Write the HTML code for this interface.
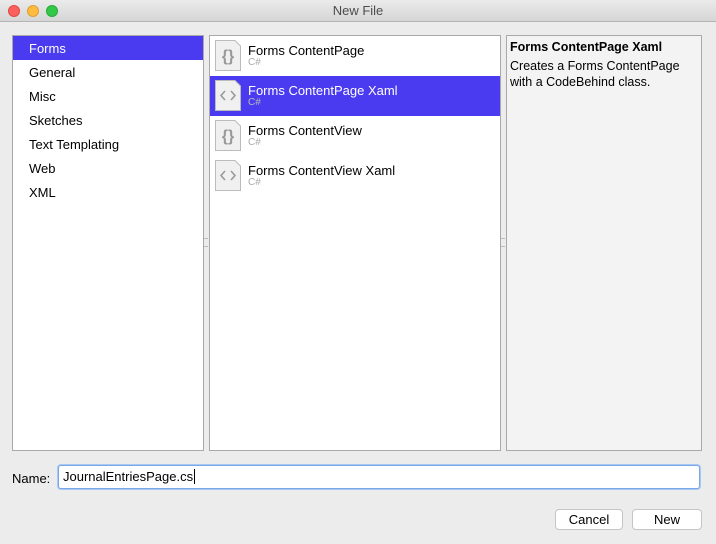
<!DOCTYPE html>
<html><head><style>
*{box-sizing:border-box;margin:0;padding:0}
body{width:716px;height:544px;background:#ececec;font-family:"Liberation Sans",sans-serif;font-size:13px;position:relative;overflow:hidden;color:#000}
.title{position:absolute;left:0;top:0;width:716px;height:22px;background:linear-gradient(#ebebeb,#d6d6d6);border-bottom:1px solid #b5b5b5;text-align:center;line-height:22px;color:#4d4d4d;font-size:13px}
.dot{position:absolute;top:5px;width:12px;height:12px;border-radius:50%}
.panel{position:absolute;top:35px;height:416px;border:1px solid #a9a9a9;background:#fff}
.lrow{height:24px;line-height:25px;padding-left:16px}
.sel{background:#4a3af0;color:#fff}
.mrow{height:40px;position:relative}
.mrow .t{position:absolute;left:38px;top:7px}
.mrow .s{position:absolute;left:38px;top:21px;font-size:10px;color:#aaa}
.mrow.sel .s{color:#bbb}
.ic{position:absolute;left:5px;top:4px;width:26px;height:31px}
.btn{position:absolute;top:509px;height:21px;background:#fff;border:1px solid #c5c5c5;border-radius:4px;text-align:center;line-height:19px;font-size:13px}
.grip{position:absolute;top:238px;width:4px;height:9px;border-top:1px solid #bbb;border-bottom:1px solid #bbb}
</style></head><body>
<div class="title">New File</div>
<div class="dot" style="left:8px;background:#fc605c;border:1px solid #de4a46"></div>
<div class="dot" style="left:27px;background:#fdbc40;border:1px solid #dea032"></div>
<div class="dot" style="left:46px;background:#34c84a;border:1px solid #27aa36"></div>

<div class="panel" style="left:12px;width:192px">
<div class="lrow sel">Forms</div>
<div class="lrow">General</div>
<div class="lrow">Misc</div>
<div class="lrow">Sketches</div>
<div class="lrow">Text Templating</div>
<div class="lrow">Web</div>
<div class="lrow">XML</div>
</div>

<div class="panel" style="left:209px;width:292px">
<div class="mrow"><svg class="ic" viewBox="0 0 26 31"><path d="M0.5 0.5H20L25.5 6V30.5H0.5Z" fill="#f0f0f0" stroke="#bbb"/><text x="13" y="21" font-size="16" font-weight="bold" fill="#999" text-anchor="middle" font-family="Liberation Sans">{}</text></svg><div class="t">Forms ContentPage</div><div class="s">C#</div></div>
<div class="mrow sel"><svg class="ic" viewBox="0 0 26 31"><path d="M0.5 0.5H20L25.5 6V30.5H0.5Z" fill="#f0f0f0" stroke="#bbb"/><path d="M10 11L6 15.5L10 20M16 11L20 15.5L16 20" fill="none" stroke="#999" stroke-width="1.6"/></svg><div class="t">Forms ContentPage Xaml</div><div class="s">C#</div></div>
<div class="mrow"><svg class="ic" viewBox="0 0 26 31"><path d="M0.5 0.5H20L25.5 6V30.5H0.5Z" fill="#f0f0f0" stroke="#bbb"/><text x="13" y="21" font-size="16" font-weight="bold" fill="#999" text-anchor="middle" font-family="Liberation Sans">{}</text></svg><div class="t">Forms ContentView</div><div class="s">C#</div></div>
<div class="mrow"><svg class="ic" viewBox="0 0 26 31"><path d="M0.5 0.5H20L25.5 6V30.5H0.5Z" fill="#f0f0f0" stroke="#bbb"/><path d="M10 11L6 15.5L10 20M16 11L20 15.5L16 20" fill="none" stroke="#999" stroke-width="1.6"/></svg><div class="t">Forms ContentView Xaml</div><div class="s">C#</div></div>
</div>

<div class="panel" style="left:506px;width:196px;background:#f3f3f3;padding:4px 0 0 3px;font-size:12.5px">
<div style="font-weight:bold;margin-bottom:4px">Forms ContentPage Xaml</div>
<div style="line-height:16px">Creates a Forms ContentPage<br>with a CodeBehind class.</div>
</div>
<div class="grip" style="left:204px"></div>
<div class="grip" style="left:501px"></div>

<div style="position:absolute;left:12px;top:471px;font-size:13px">Name:</div>
<div style="position:absolute;left:58px;top:465px;width:642px;height:24px;background:#fff;border:1px solid #7aa7e8;border-radius:3px;box-shadow:0 0 0 1px #a9c8f3;padding-left:4px;line-height:22px">JournalEntriesPage.cs<span style="border-left:1px solid #000;margin-left:1px"></span></div>

<div class="btn" style="left:555px;width:68px">Cancel</div>
<div class="btn" style="left:632px;width:70px">New</div>
</body></html>
